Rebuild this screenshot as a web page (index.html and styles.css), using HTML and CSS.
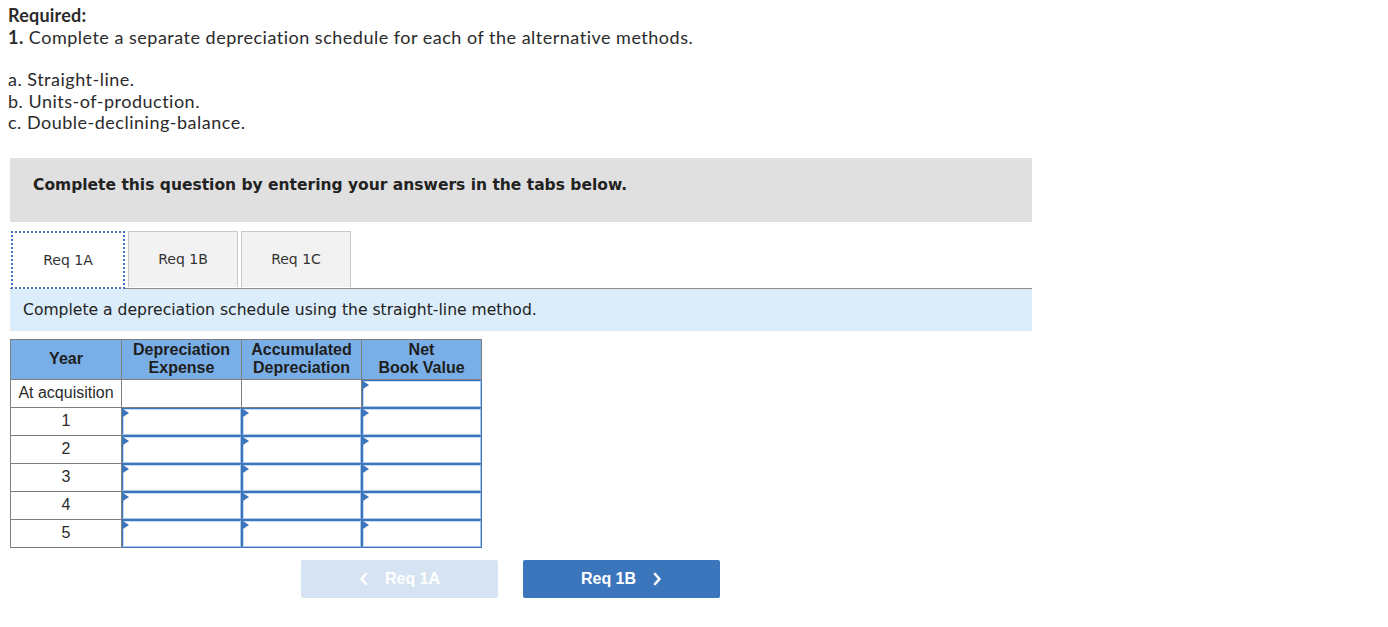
FILE: index.html
```html
<!DOCTYPE html>
<html>
<head>
<meta charset="utf-8">
<link rel="stylesheet" href="styles.css">
</head>
<body>
<div class="intro">
  <div class="req-title">Required:</div>
  <div><b>1.</b> Complete a separate depreciation schedule for each of the alternative methods.</div>
  <div class="spacer"></div>
  <div>a. Straight-line.</div>
  <div>b. Units-of-production.</div>
  <div>c. Double-declining-balance.</div>
</div>

<div class="panel">
  <div class="instruct">Complete this question by entering your answers in the tabs below.</div>
  <div class="tabs">
    <div class="tab active">Req 1A</div>
    <div class="tab">Req 1B</div>
    <div class="tab">Req 1C</div>
  </div>
  <div class="band">Complete a depreciation schedule using the straight-line method.</div>

  <table class="sched">
    <thead>
      <tr>
        <th class="c-year">Year</th>
        <th class="c-val">Depreciation<br>Expense</th>
        <th class="c-val">Accumulated<br>Depreciation</th>
        <th class="c-val">Net<br>Book Value</th>
      </tr>
    </thead>
    <tbody>
      <tr>
        <td class="yr">At acquisition</td>
        <td></td>
        <td></td>
        <td class="inp"><span class="box"></span></td>
      </tr>
      <tr><td class="yr">1</td><td class="inp"><span class="box"></span></td><td class="inp"><span class="box"></span></td><td class="inp"><span class="box"></span></td></tr>
      <tr><td class="yr">2</td><td class="inp"><span class="box"></span></td><td class="inp"><span class="box"></span></td><td class="inp"><span class="box"></span></td></tr>
      <tr><td class="yr">3</td><td class="inp"><span class="box"></span></td><td class="inp"><span class="box"></span></td><td class="inp"><span class="box"></span></td></tr>
      <tr><td class="yr">4</td><td class="inp"><span class="box"></span></td><td class="inp"><span class="box"></span></td><td class="inp"><span class="box"></span></td></tr>
      <tr><td class="yr">5</td><td class="inp"><span class="box"></span></td><td class="inp"><span class="box"></span></td><td class="inp"><span class="box"></span></td></tr>
    </tbody>
  </table>

  <div class="nav">
    <div class="btn prev"><svg class="chev left" width="9" height="14" viewBox="0 0 9 14"><path d="M7 2 L2.5 7 L7 12" fill="none" stroke="#fff" stroke-width="2.6" stroke-linecap="round" stroke-linejoin="round"/></svg>Req 1A</div>
    <div class="btn next">Req 1B<svg class="chev right" width="9" height="14" viewBox="0 0 9 14"><path d="M2 2 L6.5 7 L2 12" fill="none" stroke="#fff" stroke-width="2.6" stroke-linecap="round" stroke-linejoin="round"/></svg></div>
  </div>
</div>
</body>
</html>
```
FILE: styles.css
```css
html, body {
  margin: 0;
  padding: 0;
  background: #fff;
}
body {
  padding: 5px 0 0 8px;
  color: #222;
}
.intro {
  font-family: "Lato", "Liberation Sans", sans-serif;
  font-size: 18px;
  letter-spacing: 0.5px;
  line-height: 21.5px;
  color: #2b2b2b;
}
.req-title {
  font-weight: bold;
  letter-spacing: 0.2px;
}
.intro b {
  font-weight: bold;
}
.spacer {
  height: 21px;
}
.panel {
  margin: 24px 0 0 2px;
  width: 1022px;
}
.instruct {
  background: #e0e0e0;
  height: 64px;
  box-sizing: border-box;
  padding: 16px 0 0 23px;
  font-family: "DejaVu Sans", Verdana, sans-serif;
  font-weight: bold;
  font-size: 15.5px;
  line-height: 22px;
  color: #222;
}
.tabs {
  display: flex;
  gap: 3px;
  margin-top: 9px;
  padding-left: 1px;
  border-bottom: 1px solid #8c8c8c;
}
.tab {
  width: 110px;
  height: 56px;
  box-sizing: border-box;
  background: #f2f2f2;
  border: 1px solid #c8c8c8;
  border-bottom: none;
  display: flex;
  align-items: center;
  justify-content: center;
  font-family: "DejaVu Sans", Verdana, sans-serif;
  font-size: 14px;
  color: #333;
}
.tab.active {
  width: 114px;
  background: #fff;
  border: 2px dotted #3b76bc;
  margin-bottom: -1px;
  height: 58px;
}
.band {
  background: #dbecfa;
  height: 42px;
  box-sizing: border-box;
  padding: 11px 0 0 13px;
  font-family: "DejaVu Sans", Verdana, sans-serif;
  font-size: 15.6px;
  line-height: 20px;
  color: #222;
}
.sched {
  border-collapse: collapse;
  margin-top: 8px;
  font-family: "Liberation Sans", Arial, sans-serif;
  font-size: 16px;
  color: #222;
}
.sched th {
  background: #7aaee6;
  border: 1px solid #7f7f7f;
  height: 39px;
  padding: 0;
  font-weight: bold;
  line-height: 18px;
  text-align: center;
  vertical-align: middle;
  color: #1e1e1e;
}
.c-year { width: 110px; }
.c-val { width: 119px; }
.sched td {
  border: 1px solid #7f7f7f;
  height: 27px;
  padding: 0;
  text-align: center;
  vertical-align: middle;
  color: #2b2b2b;
}
.sched td.yr {
  font-size: 16px;
}
.sched td.inp {
  padding: 0;
  border-color: #3b76bc;
  border-width: 1px;
}
.box {
  display: block;
  height: 27px;
  box-sizing: border-box;
  border: 1px solid #3b76bc;
  border-right-color: #a9c6ea;
  border-bottom-color: #a9c6ea;
  box-shadow: inset 1px 1px 0 #c9dcf3;
  position: relative;
}
.box::before {
  content: "";
  position: absolute;
  left: 0;
  top: 0;
  border-left: 6px solid #3b76bc;
  border-top: 4px solid transparent;
  border-bottom: 4px solid transparent;
}
.nav {
  display: flex;
  gap: 25px;
  margin: 12px 0 0 291px;
}
.btn {
  width: 197px;
  height: 38px;
  border-radius: 2px;
  display: flex;
  align-items: center;
  justify-content: center;
  font-family: "Liberation Sans", Arial, sans-serif;
  font-weight: bold;
  font-size: 16px;
  color: #fff;
}
.btn.prev {
  background: #d6e3f2;
}
.btn.next {
  background: #3b76bc;
}
.chev {
  display: block;
}
.chev.left { margin-right: 17px; }
.chev.right { margin-left: 17px; }
```
